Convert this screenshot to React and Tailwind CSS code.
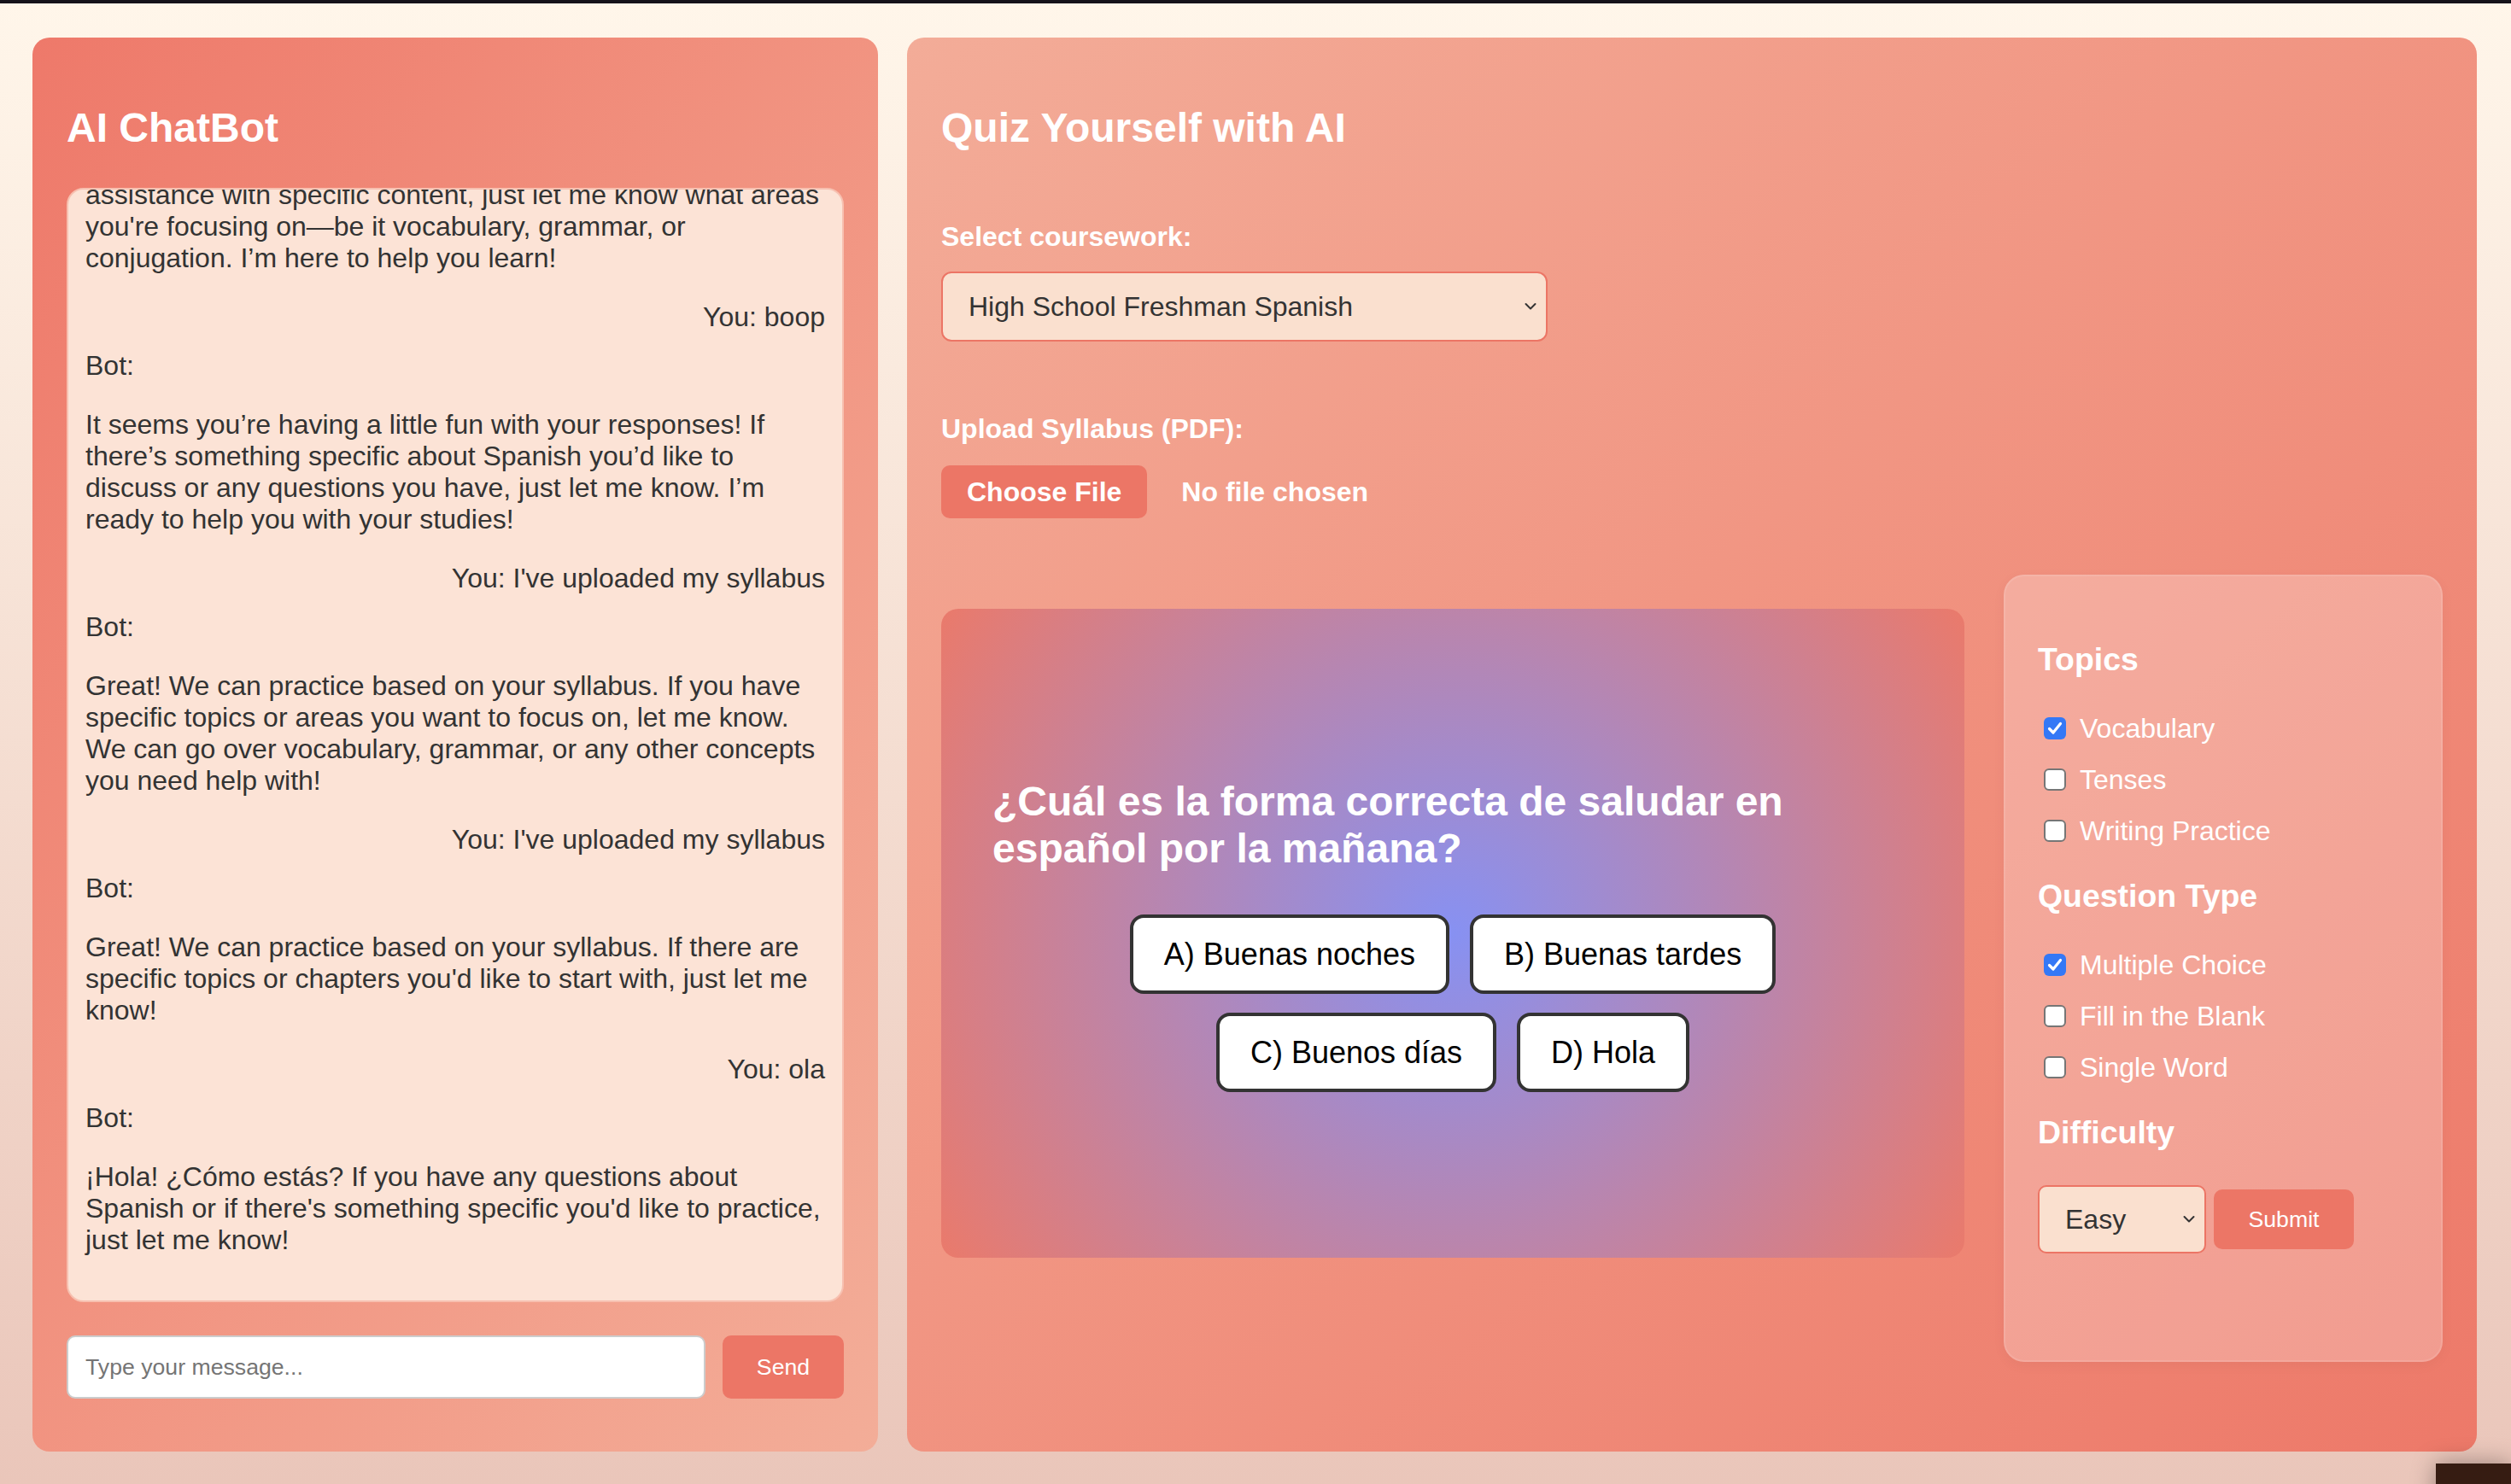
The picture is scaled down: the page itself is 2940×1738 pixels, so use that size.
import React from 'react';

const chat = [
  {
    from: 'bot',
    text: (
      <>
        Hello! I’m here to help you with your High School Freshman Spanish coursework. If you need
        <br />
        assistance with specific content, just let me know what areas you're focusing on—be it vocabulary, grammar, or conjugation. I’m here to help you learn!
      </>
    ),
  },
  { from: 'you', text: 'boop' },
  {
    from: 'bot',
    text: 'It seems you’re having a little fun with your responses! If there’s something specific about Spanish you’d like to discuss or any questions you have, just let me know. I’m ready to help you with your studies!',
  },
  { from: 'you', text: "I've uploaded my syllabus" },
  {
    from: 'bot',
    text: 'Great! We can practice based on your syllabus. If you have specific topics or areas you want to focus on, let me know. We can go over vocabulary, grammar, or any other concepts you need help with!',
  },
  { from: 'you', text: "I've uploaded my syllabus" },
  {
    from: 'bot',
    text: "Great! We can practice based on your syllabus. If there are specific topics or chapters you'd like to start with, just let me know!",
  },
  { from: 'you', text: 'ola' },
  {
    from: 'bot',
    text: "¡Hola! ¿Cómo estás? If you have any questions about Spanish or if there's something specific you'd like to practice, just let me know!",
  },
];

const answers = ['A) Buenas noches', 'B) Buenas tardes', 'C) Buenos días', 'D) Hola'];

const groups = [
  { title: 'Topics', items: [['Vocabulary', true], ['Tenses', false], ['Writing Practice', false]] },
  { title: 'Question Type', items: [['Multiple Choice', true], ['Fill in the Blank', false], ['Single Word', false]] },
];

function Chevron() {
  return (
    <svg className="pointer-events-none absolute top-1/2 -translate-y-1/2 right-[13px]" width="14" height="9" viewBox="0 0 14 9" fill="none">
      <path d="M1.5 1.5 L7 7 L12.5 1.5" stroke="#333" strokeWidth="2" strokeLinecap="round" strokeLinejoin="round" />
    </svg>
  );
}

function Check({ checked }) {
  if (checked) {
    return (
      <span className="ml-[7px] w-[26px] h-[26px] rounded-[6px] bg-[#3478f6] flex items-center justify-center shrink-0">
        <svg width="18" height="16" viewBox="0 0 18 16" fill="none">
          <path d="M2.5 8.5 L7 13 L15.5 2.5" stroke="white" strokeWidth="3.2" strokeLinecap="round" strokeLinejoin="round" />
        </svg>
      </span>
    );
  }
  return <span className="ml-[7px] w-[26px] h-[26px] rounded-[6px] bg-white border-2 border-[#767676] shrink-0" />;
}

export default function App() {
  return (
    <div className="h-screen flex flex-col bg-linear-to-b from-[#fff6ea] to-[#eac6ba] font-['Liberation_Sans',Arial,sans-serif] overflow-hidden">
      <div className="h-[4px] bg-[#15121a] shrink-0" />

      <div className="flex-1 min-h-0 flex gap-[34px] pl-[38px] pr-[40px] pt-[40px] pb-[38px]">
        {/* chat */}
        <div className="w-[990px] shrink-0 flex flex-col rounded-[20px] px-[40px] pt-[40px] pb-[62px] bg-linear-to-br from-[#ee796a] to-[#f3ad98]">
          <h2 className="mt-[38px] text-[48px] leading-[55px] font-bold text-white">AI ChatBot</h2>
          <div className="mt-[43px] flex-1 min-h-0 flex flex-col justify-end overflow-hidden rounded-[20px] border-2 border-[#f7c0b0] bg-[#fce3d6] p-[20px] text-[32px] leading-[37px] text-[#333]">
            <div>
              {chat.map((m, i) =>
                m.from === 'you' ? (
                  <div key={i} className="mb-[20px] text-right">You: {m.text}</div>
                ) : (
                  <div key={i} className="mb-[20px]">
                    Bot:
                    <p className="my-[32px]">{m.text}</p>
                  </div>
                )
              )}
            </div>
          </div>
          <div className="mt-[39px] h-[74px] flex gap-[20px]">
            <input
              className="flex-1 min-w-0 h-full bg-white border-2 border-[#cccccc] rounded-[10px] px-[20px] text-[26.67px] text-[#333] placeholder:text-[#757575] outline-none"
              placeholder="Type your message..."
            />
            <button className="w-[142px] h-full rounded-[10px] bg-[#ec7666] text-white text-[26.67px]">Send</button>
          </div>
        </div>

        {/* quiz */}
        <div className="flex-1 min-w-0 flex flex-col rounded-[20px] px-[40px] pt-[40px] bg-linear-to-br from-[#f3ac98] to-[#ed7969]">
          <h2 className="mt-[38px] text-[48px] leading-[55px] font-bold text-white">Quiz Yourself with AI</h2>

          <label className="mt-[82px] block text-[32px] leading-[37px] font-bold text-white">Select coursework:</label>
          <div className="relative mt-[22px] w-[710px] h-[82px]">
            <select className="appearance-none w-full h-full rounded-[12px] border-2 border-[#ec7565] bg-[#fae0cf] pl-[30px] text-[32px] text-[#333] outline-none">
              <option>High School Freshman Spanish</option>
            </select>
            <Chevron />
          </div>

          <label className="mt-[84px] block text-[32px] leading-[37px] font-bold text-white">Upload Syllabus (PDF):</label>
          <div className="mt-[24px] h-[62px] flex items-center">
            <button className="h-full px-[30px] rounded-[10px] bg-[#ec7666] text-white text-[32px] font-bold">Choose File</button>
            <span className="ml-[40px] text-[32px] font-bold text-white">No file chosen</span>
          </div>

          <div className="mt-[66px] flex items-start gap-[46px]">
            <div className="flex-1 min-w-0 mt-[40px] h-[760px] rounded-[20px] px-[60px] flex flex-col justify-center bg-[radial-gradient(circle,#8791f2_0%,#ea7a6b_100%)]">
              <h3 className="mt-[4px] text-[48px] leading-[55px] font-bold text-white">
                ¿Cuál es la forma correcta de saludar en español por la mañana?
              </h3>
              <div className="mt-[50px] flex flex-wrap justify-center gap-x-[24px] gap-y-[22px]">
                {answers.map((a) => (
                  <button
                    key={a}
                    className="px-[36px] py-[22px] bg-white border-4 border-[#333] rounded-[16px] text-[36px] leading-[41px] text-black"
                  >
                    {a}
                  </button>
                ))}
              </div>
            </div>

            <div className="w-[514px] shrink-0 h-[922px] rounded-[24px] px-[38px] pt-[40px] bg-white/25 border-2 border-white/10 shadow-[0_4px_16px_rgba(0,0,0,0.04)] text-white">
              {groups.map((g, gi) => (
                <div key={g.title}>
                  <h3 className={`${gi === 0 ? 'mt-[36px]' : 'mt-[33px]'} mb-[37px] text-[37.44px] leading-[43px] font-bold`}>
                    {g.title}
                  </h3>
                  <div className="flex flex-col gap-[16px]">
                    {g.items.map(([label, on]) => (
                      <label key={label} className="h-[44px] flex items-center text-[32px]">
                        <Check checked={on} />
                        <span className="ml-[16px]">{label}</span>
                      </label>
                    ))}
                  </div>
                </div>
              ))}
              <h3 className="mt-[33px] mb-[40px] text-[37.44px] leading-[43px] font-bold">Difficulty</h3>
              <div className="flex items-center gap-[9px]">
                <div className="relative w-[197px] h-[80px]">
                  <select className="appearance-none w-full h-full rounded-[10px] border-2 border-[#ec7565] bg-[#fae0cf] pl-[30px] text-[32px] text-[#333] outline-none">
                    <option>Easy</option>
                    <option>Medium</option>
                    <option>Hard</option>
                  </select>
                  <Chevron />
                </div>
                <button className="w-[164px] h-[70px] rounded-[10px] bg-[#ec7666] text-white text-[26.67px]">Submit</button>
              </div>
            </div>
          </div>
        </div>
      </div>

      <div className="fixed right-0 top-[1714px] w-[88px] h-[80px] bg-[#361c12] shadow-[0_0_28px_rgba(0,0,0,0.35)]" />
    </div>
  );
}
